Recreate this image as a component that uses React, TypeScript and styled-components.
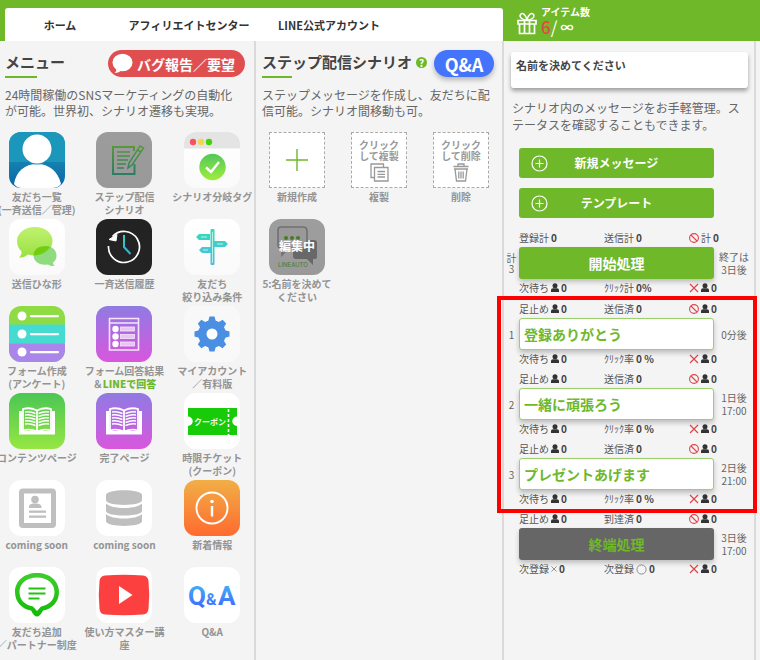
import React from 'react';
import styled, { createGlobalStyle, css } from 'styled-components';

const green = '#6eb82a';

const GlobalStyle = createGlobalStyle`
  *, *::before, *::after { box-sizing: border-box; }
  body {
    margin: 0;
    background: #f4f4f4;
    color: #666;
    font-family: "Noto Sans CJK JP", sans-serif;
    font-size: 12px;
    line-height: 16px;
    overflow-x: hidden;
  }
  button, input, textarea { font: inherit; color: inherit; }
  button { border: 0; padding: 0; background: none; cursor: pointer; }
  a { color: inherit; text-decoration: none; }
  p, h2 { margin: 0; }
  svg { display: block; flex: none; }
`;

const columns = css`
  display: grid;
  grid-template-columns: 256fr 248fr 252fr 4fr;
`;

/* ---------- header ---------- */

const Header = styled.header`
  ${columns}
  height: 41px;
  background: ${green};
`;

const Nav = styled.nav`
  grid-column: span 2;
  display: grid;
  grid-template-columns: 110fr 148fr 132fr 108fr;
  align-items: center;
  margin: 8px 1px 0 5px;
  border-radius: 3px 3px 0 0;
  background: #fff;
  color: #333;
  font-size: 11px;
  font-weight: 700;
  text-align: center;
  white-space: nowrap;
`;

const ItemCounter = styled.div`
  display: flex;
  align-items: flex-start;
  gap: 4px;
  padding: 5px 0 0 13px;
  color: #fff;
  svg { margin-top: 6px; }
`;

const CounterLabel = styled.div`
  font-size: 10px;
  font-weight: 700;
  line-height: 14px;
`;

const CounterValue = styled.div`
  display: flex;
  align-items: center;
  font-size: 17px;
  line-height: 16px;
  em { color: #e8483f; font-style: normal; font-weight: 500; }
  b { margin-left: 3px; font-size: 13px; }
`;

/* ---------- shared column parts ---------- */

const Main = styled.main`
  ${columns}
  min-height: calc(100vh - 41px);
`;

const Column = styled.section`
  min-width: 0;
  padding-top: 9px;
  border-right: 2px solid #dadada;
`;

const HeadRow = styled.div<{ $inset: number }>`
  display: flex;
  align-items: flex-start;
  height: 28px;
  padding: 0 8px 0 ${p => p.$inset}px;
`;

const Title = styled.h2<{ $bar: number }>`
  color: #444;
  font-size: 15px;
  font-weight: 700;
  line-height: 24px;
  white-space: nowrap;
  &::after {
    content: '';
    display: block;
    width: ${p => p.$bar}px;
    height: 2px;
    margin-top: 2px;
    background: ${green};
  }
`;

const HelpLink = styled.a`
  display: grid;
  place-items: center;
  width: 11px;
  height: 11px;
  margin: 7px 0 0 4px;
  border-radius: 50%;
  background: ${green};
  color: #fff;
  font-size: 10px;
  font-weight: 700;
  line-height: 11px;
`;

const Pill = styled.button<{ $color: string }>`
  display: flex;
  align-items: center;
  justify-content: center;
  gap: 4px;
  height: 27px;
  margin-left: auto;
  margin-right: 1px;
  padding: 0 10px 0 4px;
  border-radius: 14px;
  background: ${p => p.$color};
  color: #fff;
  font-size: 14px;
  font-weight: 700;
  line-height: 26px;
  white-space: nowrap;
`;

const QaPill = styled(Pill)`
  width: 60px;
  margin-right: 0;
  padding: 0;
  font-size: 18px;
  box-shadow: 0 3px 5px rgba(0, 0, 0, 0.25);
`;

const Lead = styled.p<{ $inset: number }>`
  margin: 9px 8px 13px ${p => p.$inset}px;
  white-space: nowrap;
`;

const TileGrid = styled.div<{ $bleed?: boolean }>`
  display: grid;
  grid-template-columns: repeat(3, minmax(0, 1fr));
  row-gap: 3px;
  margin: ${p => (p.$bleed ? '0 -2px 0 -7px' : '0')};
`;

const Tile = styled.button`
  display: flex;
  flex-direction: column;
  align-items: center;
  gap: 2px;
  min-height: 84px;
`;

const Caption = styled.span`
  color: #939393;
  font-size: 10px;
  font-weight: 700;
  line-height: 13px;
  white-space: pre;
  b { color: ${green}; }
`;

const AppIcon = styled.svg`
  width: 56px;
  height: 56px;
  border-radius: 12px;
`;

const DashedBox = styled.span`
  display: flex;
  flex-direction: column;
  align-items: center;
  justify-content: center;
  gap: 2px;
  width: 56px;
  height: 56px;
  border: 1px dashed #aaa;
  background: #fff;
  color: #999;
  font-size: 10px;
  font-weight: 700;
  line-height: 11px;
  white-space: pre;
`;

/* ---------- scenario column ---------- */

const NameField = styled.textarea`
  display: block;
  width: calc(100% - 13px);
  height: 36px;
  margin: 2px 6px 11px 7px;
  padding: 5px;
  border: 0;
  border-radius: 3px;
  outline: 0;
  background: #fff;
  box-shadow: 0 3px 4px rgba(0, 0, 0, 0.35);
  color: #444;
  font-size: 11px;
  font-weight: 700;
  resize: none;
  overflow: hidden;
`;

const ScenarioLead = styled.p`
  margin: 0 8px 15px;
  line-height: 17px;
  white-space: nowrap;
`;

const Actions = styled.div`
  display: grid;
  gap: 10px;
  margin: 0 40px 11px 15px;
`;

const ActionButton = styled.button`
  display: grid;
  grid-template-columns: 40px 1fr 40px;
  align-items: center;
  justify-items: center;
  height: 30px;
  border-radius: 3px;
  background: ${green};
  color: #fff;
  font-size: 12px;
  font-weight: 700;
`;

const Step = styled.div`
  display: grid;
  grid-template-columns: 15px 1fr 40px;
  grid-template-rows: 18px 32px 20px;
  align-items: center;
`;

const Stats = styled.div`
  grid-column: 2 / -1;
  align-self: start;
  display: grid;
  grid-template-columns: 85fr 85fr 65fr;
  color: #555;
  font-size: 10px;
  line-height: 18px;
  white-space: nowrap;
`;

const Stat = styled.span`
  display: flex;
  align-items: center;
  gap: 2px;
  b { color: #444; font-weight: 700; }
`;

const Side = styled.div`
  color: #666;
  font-size: 10px;
  line-height: 13px;
  text-align: center;
  white-space: pre;
`;

const Index = styled(Side)`
  line-height: 11px;
`;

const StepButton = styled.button<{ $kind: 'start' | 'message' | 'end' }>`
  height: 32px;
  border-radius: 3px;
  font-size: 14px;
  font-weight: 700;
  line-height: 28px;
  box-shadow: 0 3px 5px rgba(0, 0, 0, 0.22);
  ${p => p.$kind === 'start' && css`background: ${green}; color: #fff;`}
  ${p => p.$kind === 'end' && css`background: #666; color: ${green};`}
  ${p => p.$kind === 'message' && css`
    padding-left: 4px;
    border: 1px solid #9bd06c;
    background: #fff;
    color: ${green};
    text-align: left;
  `}
`;

const Highlighted = styled.div`
  position: relative;
  margin-top: 1px;
  &::after {
    content: '';
    position: absolute;
    inset: -4px -3px -3px -7px;
    border: 4px solid #f00;
    pointer-events: none;
  }
`;

/* ---------- small glyphs ---------- */

const PersonGlyph = () => (
  <svg width="8" height="10" viewBox="0 0 8 10" fill="#333">
    <circle cx="4" cy="2.8" r="2.5" />
    <path d="M0 9V7Q0 5.400 2 5.200H6Q8 5.400 8 7V9Z" />
  </svg>
);
const BanGlyph = () => (
  <svg width="10" height="10" viewBox="0 0 10 10" fill="none" stroke="#e0444a" strokeWidth="1.1">
    <circle cx="5" cy="5" r="4.4" />
    <path d="M2 2L8 8" />
  </svg>
);
const CrossGlyph = () => (
  <svg width="10" height="10" viewBox="0 0 10 10" stroke="#e0444a" strokeWidth="1.2">
    <path d="M1 1L9 9M9 1L1 9" />
  </svg>
);
const SmallCross = () => (
  <svg width="6" height="10" viewBox="0 0 6 10" stroke="#777" strokeWidth=".8">
    <path d="M.5 2.5L5.5 7.5M5.5 2.5L.5 7.5" />
  </svg>
);
const RingGlyph = () => (
  <svg width="11" height="11" viewBox="0 0 11 11" fill="none" stroke="#777" strokeWidth=".8">
    <circle cx="5.5" cy="5.5" r="4.6" />
  </svg>
);
const CirclePlus = () => (
  <svg width="17" height="17" viewBox="0 0 17 17" fill="none" stroke="#fff" strokeWidth="1.2">
    <circle cx="8.5" cy="8.5" r="7.5" />
    <path d="M4.5 8.5H12.5M8.5 4.5V12.5" />
  </svg>
);
const GiftGlyph = () => (
  <svg width="20" height="24" viewBox="0 0 20 24" fill="none" stroke="#fff" strokeWidth="1.7">
    <path d="M1 9.5H19V13H1ZM2.5 13V22.5H17.5V13M7.5 9.5V22M12.5 9.5V22" />
    <path d="M10 9C5 9 2 6 3.500 3.500C5.500 1 9 4 10 9C11 4 14.500 1 16.500 3.500C18 6 15 9 10 9" strokeWidth="1.500" />
  </svg>
);
const BubbleGlyph = () => (
  <svg width="21" height="21" viewBox="0 0 21 21" fill="#fff">
    <ellipse cx="10.500" cy="9.500" rx="10" ry="8.700" />
    <path d="M4 15Q5 18 2.500 20Q7 20 10 17Z" />
  </svg>
);
const CopyGlyph = () => (
  <svg width="19" height="19" viewBox="0 0 19 19" fill="none" stroke="#999" strokeWidth="1.300">
    <path d="M4.500 14.500H1V1H13.500V4.500M4.500 4.500H18V18H4.500ZM7.500 8.500H15M7.500 11.300H15M7.500 14H15" />
  </svg>
);
const TrashGlyph = () => (
  <svg width="16" height="19" viewBox="0 0 16 19" fill="none" stroke="#999" strokeWidth="1.300">
    <path d="M.5 3.500H15.500M5 3V1H11V3M1 6H15M2 6L3.500 18H12.500L14 6M5.800 8.500V15.500M8 8.500V15.500M10.200 8.500V15.500" />
  </svg>
);
const BigPlus = () => (
  <svg width="24" height="24" viewBox="0 0 24 24" stroke={green} strokeWidth="1.400">
    <path d="M1 12H23M12 1V23" />
  </svg>
);

/* ---------- app icons ---------- */

type Stops = [string, string];
const Frame = ({ id, fill, children }: { id: string; fill: Stops; children?: React.ReactNode }) => (
  <AppIcon viewBox="0 0 56 56">
    <defs>
      <linearGradient id={id} x1="0" y1="0" x2="0" y2="1">
        <stop offset="0" stopColor={fill[0]} />
        <stop offset="1" stopColor={fill[1]} />
      </linearGradient>
    </defs>
    <rect width="56" height="56" fill={`url(#${id})`} />
    {children}
  </AppIcon>
);

const Gradient = ({ id, from, to }: { id: string; from: string; to: string }) => (
  <linearGradient id={id} x1="0" y1="0" x2="0" y2="56" gradientUnits="userSpaceOnUse">
    <stop offset=".2" stopColor={from} />
    <stop offset=".85" stopColor={to} />
  </linearGradient>
);

const FriendsIcon = () => (
  <Frame id="friends" fill={['#1f9fc0', '#0b66a4']}>
    <rect width="56" height="30" fill="#1c97bc" />
    <path d="M5 52C7 39 16 32 28 32S49 39 52 52Q49 56 44 56H12Q8 56 5 52Z" fill="#fff" />
    <circle cx="28" cy="17" r="15.500" fill="#1c91b9" />
    <circle cx="28" cy="17" r="14.500" fill="#fff" />
  </Frame>
);
const StepIcon = () => (
  <Frame id="step" fill={['#9c9c9c', '#999']}>
    <Gradient id="stepInk" from="#5c9b35" to="#217a6b" />
    <g fill="none" stroke="url(#stepInk)" strokeWidth="2">
      <path d="M38 19V15H17V42H38.500V32" />
      <path d="M21 20H34M21 24H34M21 28H32M21 32H30M21 36H28" strokeWidth="1.600" />
      <path d="M44 14L47.500 16L36 33L32 36L33 31ZM41.500 18L45 20" strokeWidth="1.500" />
    </g>
  </Frame>
);
const BranchIcon = () => (
  <Frame id="branch" fill={['#fff', '#fafafa']}>
    <Gradient id="branchDot" from="#35b968" to="#9cec3c" />
    <rect width="56" height="16.500" fill="#e4e4e4" />
    <circle cx="9" cy="10" r="3.200" fill="#f7555c" />
    <circle cx="17" cy="10" r="3.200" fill="#f3d64f" />
    <circle cx="25" cy="10" r="3.200" fill="#46d10d" />
    <circle cx="28.500" cy="35" r="13.200" fill="url(#branchDot)" />
    <path d="M22 35.500L27 40L35 30" fill="none" stroke="#fff" strokeWidth="2.400" />
  </Frame>
);
const ChatIcon = () => (
  <Frame id="chat" fill={['#fff', '#fafafa']}>
    <Gradient id="chatBig" from="#bdf06a" to="#8ddb36" />
    <path d="M26 8C36 8 43.500 14 43.500 22S36 36.500 26 36.500Q23 36.500 19 35.500Q15 39 10 38.500Q13 36 12.500 32.500Q8 28 8 22C8 14 16 8 26 8Z" fill="url(#chatBig)" />
    <path d="M36 27C43 27 47.500 31 47.500 36.500Q47.500 41 44 43.500Q44 46 46 47Q42 47.500 39 45.500C30 47 24.500 42 24.500 36.500S29 27 36 27Z" fill="#7dd56a" fillOpacity=".85" />
    <path d="M41 27.800C38 32 33 36.200 24.600 36.400C25 30 30 26 41 27.800Z" fill="#72ce0c" />
  </Frame>
);
const HistoryIcon = () => (
  <Frame id="history" fill={['#222', '#242424']}>
    <Gradient id="hand" from="#34e0b0" to="#3c8cf0" />
    <path d="M16.500 17.500A15.500 15.500 0 1 1 12.500 27" fill="none" stroke="#fff" strokeWidth="1.700" />
    <path d="M13 20.500L21 15.500L20 22Z" fill="#fff" stroke="#fff" />
    <path d="M28 16V28L34.500 35" fill="none" stroke="url(#hand)" strokeWidth="2" />
  </Frame>
);
const SignIcon = () => (
  <Frame id="sign" fill={['#fff', '#fafafa']}>
    <Gradient id="post" from="#31dfb4" to="#58b2ee" />
    <g fill="url(#post)">
      <rect x="26.500" y="10" width="4" height="36" rx="1" />
      <path d="M15 15H26V21H15L12 18ZM30 22H41L44 25L41 28H30ZM18 28H27V34H18L15 31Z" />
    </g>
    <path d="M28.500 13V44M17 18H23M33 25H39M19 31H24" stroke="#b6f3e7" strokeWidth="1" />
  </Frame>
);
const FormIcon = () => (
  <Frame id="form" fill={['#8edb43', '#8edb43']}>
    <rect y="18.500" width="56" height="19" fill="#46dbd0" />
    <rect y="37.500" width="56" height="19" fill="#aa86ea" />
    {[10, 28, 46].map(y => (
      <g key={y} fill="#fff">
        <circle cx="13" cy={y} r="4.500" />
        <rect x="21" y={y - 1} width="29" height="2.200" rx="1" />
      </g>
    ))}
  </Frame>
);
const AnswersIcon = () => (
  <Frame id="answers" fill={['#8f7be3', '#d956dd']}>
    <path d="M13.500 12.500H42.500V44H13.500ZM13.500 17H42.500" fill="none" stroke="#f5e6fb" strokeWidth="1.600" />
    {[23, 30.500, 38].map(y => (
      <g key={y}>
        <circle cx="19.500" cy={y} r="3.200" fill="#fff" />
        <rect x="24.500" y={y - 2} width="14" height="4" fill="#e9c6f2" stroke="#f5e6fb" strokeWidth=".8" />
      </g>
    ))}
  </Frame>
);
const GearIcon = () => (
  <Frame id="gear" fill={['#f8f8f8', '#f9f9f9']}>
    <g fill="#4a8fe2">
      {[0, 45, 90, 135].map(a => (
        <path key={a} d="M24 16L25.500 10.500H30.500L32 16V40L30.500 45.500H25.500L24 40Z" transform={`rotate(${a} 28 28)`} />
      ))}
      <circle cx="28" cy="28" r="13.800" />
    </g>
    <circle cx="28" cy="28" r="5.500" fill="#fff" />
  </Frame>
);
const BookIcon = ({ id, fill }: { id: string; fill: Stops }) => (
  <Frame id={id} fill={fill}>
    <path d="M10 18H13V38H43V18H46V41.500H10Z" fill="#fff" />
    <g fill="none" stroke="#fff">
      <path d="M28 17.500Q21 14 14 16V37.500Q21 35.500 28 38.500Q35 35.500 42 37.500V16Q35 14 28 17.500V38" strokeWidth="1.800" />
      {[19, 22, 25, 28, 31].map(y => (
        <path key={y} d={`M16 ${y}Q21 ${y - 1} 26.500 ${y + 1.5}M40 ${y}Q35 ${y - 1} 29.500 ${y + 1.5}`} strokeWidth="1.400" />
      ))}
    </g>
  </Frame>
);
const CouponIcon = () => (
  <Frame id="coupon" fill={['#fff', '#fff']}>
    <path d="M4 15H53V23.500A4.500 4.500 0 0 0 53 33V42H4V33A4.500 4.500 0 0 0 4 23.500Z" fill="#18cb08" />
    <path d="M44.500 16V42" stroke="#fff" strokeWidth="1.600" strokeDasharray="3 2" />
    <text x="10" y="32" fontSize="8" fontWeight="700" fill="#fff">クーポン</text>
  </Frame>
);
const ProfileIcon = () => (
  <Frame id="profile" fill={['#fff', '#fff']}>
    <rect x="12.500" y="11" width="32" height="34.500" rx="1.500" fill="none" stroke="#bfbfbf" strokeWidth="5" />
    <g fill="#bfbfbf">
      <circle cx="26" cy="19.500" r="3.800" />
      <path d="M20 28V26Q21 23 26 23.500Q31 23 32.500 26V28Z" />
      <rect x="20" y="30.500" width="17" height="2.300" />
      <rect x="20" y="35.500" width="17" height="2.300" />
    </g>
  </Frame>
);
const DatabaseIcon = () => (
  <Frame id="database" fill={['#fff', '#fff']}>
    <g fill="#bfbfbf">
      <path d="M10 15C10 8.500 46 8.500 46 15V20C46 26.500 10 26.500 10 20Z" />
      <path d="M10 23.500C16 29.500 40 29.500 46 23.500V31C46 37 10 37 10 31Z" />
      <path d="M10 34C16 40 40 40 46 34V41C46 47.500 10 47.500 10 41Z" />
    </g>
  </Frame>
);
const NewsIcon = () => (
  <Frame id="news" fill={['#f1af46', '#ff6a2f']}>
    <circle cx="28" cy="28" r="15.500" fill="none" stroke="#fff" strokeWidth="1.900" />
    <circle cx="28" cy="21.500" r="1.800" fill="#fff" />
    <path d="M28 26V36.500" stroke="#fff" strokeWidth="2.400" />
  </Frame>
);
const AddFriendIcon = () => (
  <Frame id="add" fill={['#fff', '#fff']}>
    <Gradient id="addInk" from="#3ccb2a" to="#12bd08" />
    <path fillRule="evenodd" d="M28 6C41 6 50 14 50 25C50 35 43 42 34 43.500Q31 49.500 28 49.500T22 43.500C13 42 6 35 6 25C6 14 15 6 28 6ZM28 10.500C17 10.500 10.500 17 10.500 25C10.500 33 16 38 24 39.500L28 44L32 39.500C40 38 45.500 33 45.500 25C45.500 17 39 10.500 28 10.500Z" fill="url(#addInk)" />
    <path d="M19.500 21.500H36.500M19.500 26.500H36.500M19.500 31.500H30.500" stroke="#22c414" strokeWidth="2" />
  </Frame>
);
const VideoIcon = () => (
  <Frame id="video" fill={['#fff', '#fff']}>
    <path d="M9 8.500Q28 7 47 8.500Q52 9 52.500 14Q54 28 52.500 42Q52 47 47 47.500Q28 49 9 47.500Q4 47 3.500 42Q2 28 3.500 14Q4 9 9 8.500Z" fill="#fc4040" />
    <path d="M23 19L36.500 28L23 37Z" fill="#fff" />
  </Frame>
);
const QaIcon = () => (
  <Frame id="qa" fill={['#fff', '#fff']}>
    <Gradient id="qaInk" from="#45c3f5" to="#3c55ff" />
    <g fill="url(#qaInk)" fontFamily="Roboto, sans-serif" fontWeight="700">
      <text x="4" y="38" fontSize="26">Q</text>
      <text x="22" y="38" fontSize="16">&amp;</text>
      <text x="34" y="38" fontSize="26">A</text>
    </g>
  </Frame>
);
const EditingIcon = () => (
  <Frame id="editing" fill={['#9e9e9e', '#999']}>
    <path d="M27 21H45Q48 21 48 24V38Q48 40 45 40H44V46L38 40H27Q24 40 24 37V24Q24 21 27 21Z" fill="#686868" />
    <path d="M12 8H34Q38 8 38 12V26Q38 29 35 29H19L13 36V29H12Q9 29 9 26V11Q9 8 12 8Z" fill="#999" stroke="#707070" strokeWidth="1.600" />
    <g fill="#49792a">
      <circle cx="17" cy="19" r="2" />
      <circle cx="23" cy="19" r="2" />
      <circle cx="29" cy="19" r="2" />
    </g>
    <text x="9" y="48" fontSize="6" fill="#49792a" fontFamily="Inter, sans-serif">LINEAUTO</text>
    <text x="28" y="32" fontSize="12" fontWeight="700" fill="#fff" textAnchor="middle">編集中</text>
  </Frame>
);

/* ---------- content ---------- */

const menu: { icon: React.ReactNode; label: React.ReactNode }[] = [
  { icon: <FriendsIcon />, label: '友だち一覧\n(一斉送信／管理)' },
  { icon: <StepIcon />, label: 'ステップ配信\nシナリオ' },
  { icon: <BranchIcon />, label: 'シナリオ分岐タグ' },
  { icon: <ChatIcon />, label: '送信ひな形' },
  { icon: <HistoryIcon />, label: '一斉送信履歴' },
  { icon: <SignIcon />, label: '友だち\n絞り込み条件' },
  { icon: <FormIcon />, label: 'フォーム作成\n(アンケート)' },
  { icon: <AnswersIcon />, label: <>フォーム回答結果{'\n'}＆<b>LINEで回答</b></> },
  { icon: <GearIcon />, label: 'マイアカウント\n／有料版' },
  { icon: <BookIcon id="book" fill={['#4ac655', '#96e742']} />, label: 'コンテンツページ' },
  { icon: <BookIcon id="done" fill={['#8f7be3', '#d956dd']} />, label: '完了ページ' },
  { icon: <CouponIcon />, label: '時限チケット\n(クーポン)' },
  { icon: <ProfileIcon />, label: 'coming soon' },
  { icon: <DatabaseIcon />, label: 'coming soon' },
  { icon: <NewsIcon />, label: '新着情報' },
  { icon: <AddFriendIcon />, label: '友だち追加\n／パートナー制度' },
  { icon: <VideoIcon />, label: '使い方マスター講\n座' },
  { icon: <QaIcon />, label: 'Q&A' },
];

const messages = [
  { index: '1', name: '登録ありがとう', time: '0分後' },
  { index: '2', name: '一緒に頑張ろう', time: '1日後\n17:00' },
  { index: '3', name: 'プレゼントあげます', time: '2日後\n21:00' },
];

const Waiting = ({ label }: { label: string }) => <Stat>{label}<PersonGlyph /> <b>0</b></Stat>;
const Failed = () => <Stat><CrossGlyph /><PersonGlyph /> <b>0</b></Stat>;
const Blocked = () => <Stat><BanGlyph /><PersonGlyph /> <b>0</b></Stat>;
const Count = ({ label, value = '0' }: { label: string; value?: string }) => (
  <Stat>{label} <b>{value}</b></Stat>
);

export default function App() {
  return (
    <>
      <GlobalStyle />
      <Header>
        <Nav>
          <a href="#home">ホーム</a>
          <a href="#affiliate">アフィリエイトセンター</a>
          <a href="#line">LINE公式アカウント</a>
        </Nav>
        <ItemCounter>
          <GiftGlyph />
          <div>
            <CounterLabel>アイテム数</CounterLabel>
            <CounterValue><em>6</em>/<b>∞</b></CounterValue>
          </div>
        </ItemCounter>
      </Header>
      <Main>
        <Column>
          <HeadRow $inset={5}>
            <Title $bar={32}>メニュー</Title>
            <Pill $color="#e04f50"><BubbleGlyph />バグ報告／要望</Pill>
          </HeadRow>
          <Lead $inset={5}>24時間稼働のSNSマーケティングの自動化<br />が可能。世界初、シナリオ遷移も実現。</Lead>
          <TileGrid $bleed>
            {menu.map((item, i) => (
              <Tile key={i}>{item.icon}<Caption>{item.label}</Caption></Tile>
            ))}
          </TileGrid>
        </Column>

        <Column>
          <HeadRow $inset={6}>
            <Title $bar={30}>ステップ配信シナリオ</Title>
            <HelpLink href="#help" aria-label="ヘルプ">?</HelpLink>
            <QaPill $color="#4474fb">Q&amp;A</QaPill>
          </HeadRow>
          <Lead $inset={6}>ステップメッセージを作成し、友だちに配<br />信可能。シナリオ間移動も可。</Lead>
          <TileGrid>
            <Tile><DashedBox><BigPlus /></DashedBox><Caption>新規作成</Caption></Tile>
            <Tile><DashedBox>{'クリック\nして複製'}<CopyGlyph /></DashedBox><Caption>複製</Caption></Tile>
            <Tile><DashedBox>{'クリック\nして削除'}<TrashGlyph /></DashedBox><Caption>削除</Caption></Tile>
            <Tile><EditingIcon /><Caption>{'5:名前を決めて\nください'}</Caption></Tile>
          </TileGrid>
        </Column>

        <Column>
          <NameField aria-label="シナリオ名" defaultValue="名前を決めてください" />
          <ScenarioLead>シナリオ内のメッセージをお手軽管理。ス<br />テータスを確認することもできます。</ScenarioLead>
          <Actions>
            <ActionButton><CirclePlus />新規メッセージ</ActionButton>
            <ActionButton><CirclePlus />テンプレート</ActionButton>
          </Actions>

          <Step>
            <Stats><Count label="登録計" /><Count label="送信計" /><Stat><BanGlyph />計 <b>0</b></Stat></Stats>
            <Index>{'計\n3'}</Index>
            <StepButton $kind="start">開始処理</StepButton>
            <Side>{'終了は\n3日後'}</Side>
            <Stats><Waiting label="次待ち" /><Count label="ｸﾘｯｸ計" value="0%" /><Failed /></Stats>
          </Step>
          <Highlighted>
            {messages.map(m => (
              <Step key={m.index}>
                <Stats><Waiting label="足止め" /><Count label="送信済" /><Blocked /></Stats>
                <Index>{m.index}</Index>
                <StepButton $kind="message">{m.name}</StepButton>
                <Side>{m.time}</Side>
                <Stats><Waiting label="次待ち" /><Count label="ｸﾘｯｸ率" value="0 %" /><Failed /></Stats>
              </Step>
            ))}
          </Highlighted>
          <Step>
            <Stats><Waiting label="足止め" /><Count label="到達済" /><Blocked /></Stats>
            <Index />
            <StepButton $kind="end">終端処理</StepButton>
            <Side>{'3日後\n17:00'}</Side>
            <Stats>
              <Stat>次登録<SmallCross /> <b>0</b></Stat>
              <Stat>次登録<RingGlyph /> <b>0</b></Stat>
              <Failed />
            </Stats>
          </Step>
        </Column>
      </Main>
    </>
  );
}
